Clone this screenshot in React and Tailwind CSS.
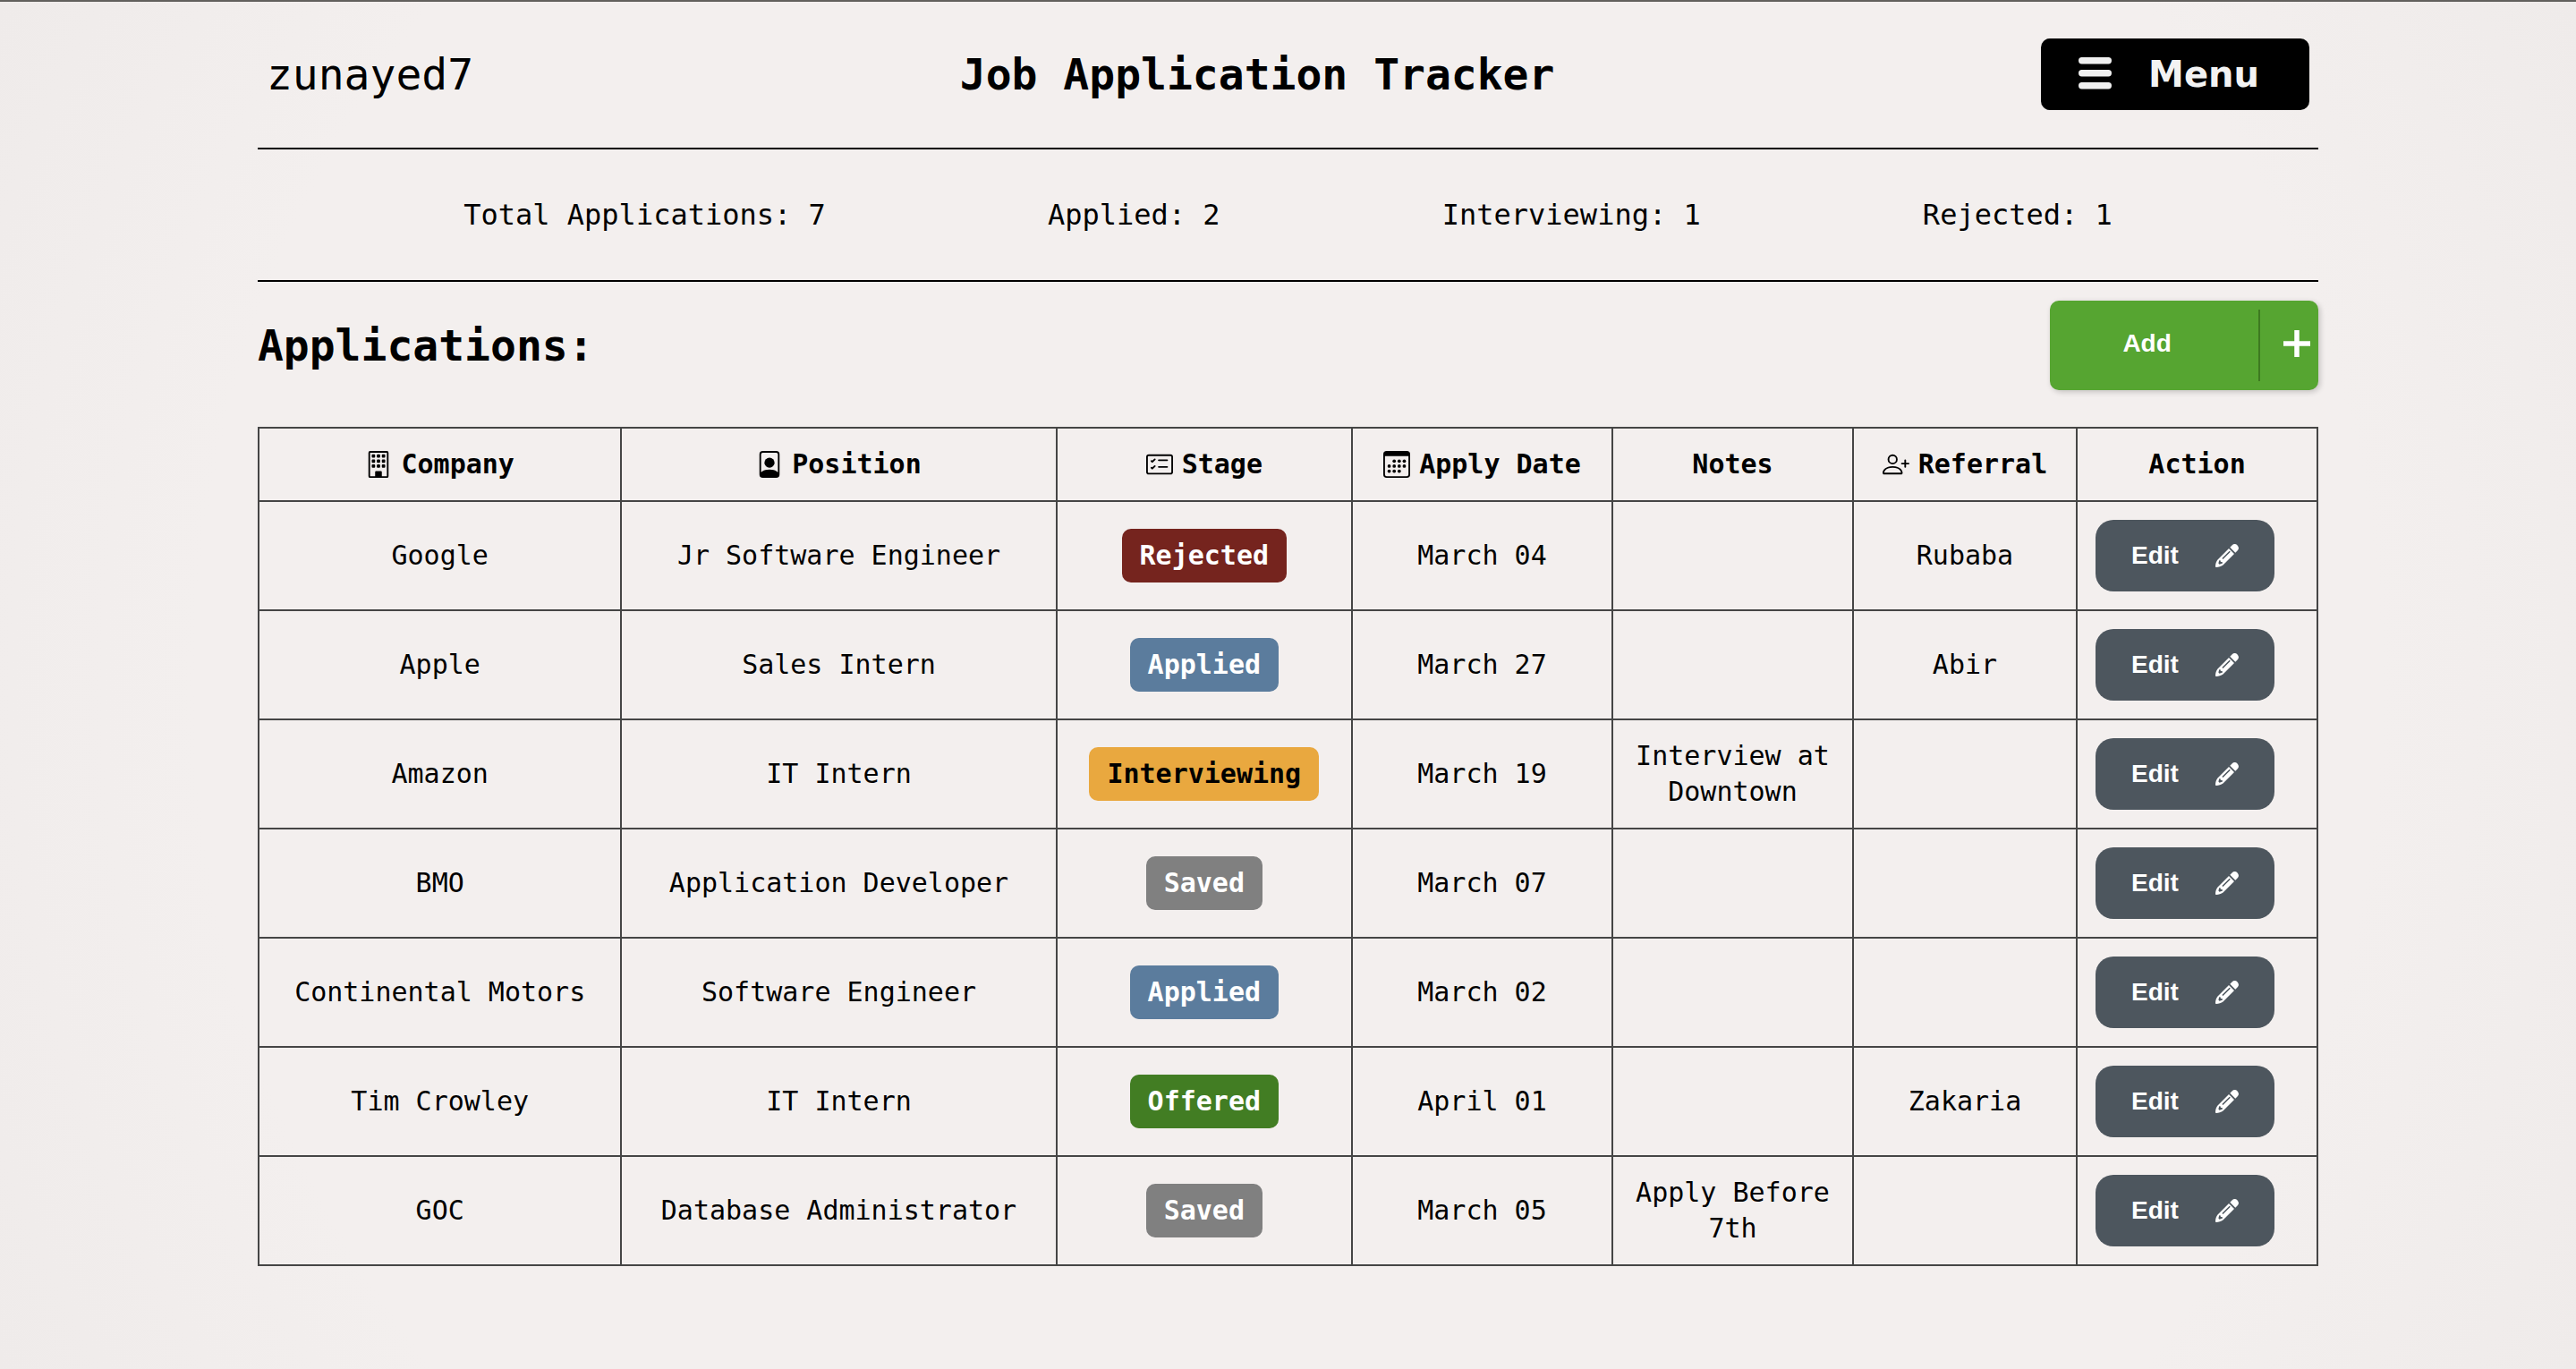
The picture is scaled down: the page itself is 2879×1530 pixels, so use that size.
import { BsBuilding, BsFilePerson, BsCardChecklist, BsPersonPlus } from "react-icons/bs";

const rows = [
  ["Google", "Jr Software Engineer", "Rejected", "March 04", "", "Rubaba"],
  ["Apple", "Sales Intern", "Applied", "March 27", "", "Abir"],
  ["Amazon", "IT Intern", "Interviewing", "March 19", "Interview at Downtown", ""],
  ["BMO", "Application Developer", "Saved", "March 07", "", ""],
  ["Continental Motors", "Software Engineer", "Applied", "March 02", "", ""],
  ["Tim Crowley", "IT Intern", "Offered", "April 01", "", "Zakaria"],
  ["GOC", "Database Administrator", "Saved", "March 05", "Apply Before 7th", ""],
];

const stageStyles = {
  Rejected: "bg-[#75241e] text-white",
  Applied: "bg-[#5b7c9d] text-white",
  Interviewing: "bg-[#e9a83f] text-black",
  Saved: "bg-[#808080] text-white",
  Offered: "bg-[#427d23] text-white",
};

const stats = ["Total Applications: 7", "Applied: 2", "Interviewing: 1", "Rejected: 1"];

function Calendar() {
  return (
    <svg viewBox="0 0 16 16" fill="currentColor" className="size-[30px]" aria-hidden="true">
      <path fillRule="evenodd" d="M2 0h12a2 2 0 0 1 2 2v12a2 2 0 0 1-2 2H2a2 2 0 0 1-2-2V2a2 2 0 0 1 2-2Zm-1 3v11a1 1 0 0 0 1 1h12a1 1 0 0 0 1-1V3.01H1Z" />
      {[[6.5, 6], [9.5, 6], [12.5, 6], [3.5, 9], [6.5, 9], [9.5, 9], [12.5, 9], [3.5, 12], [6.5, 12], [9.5, 12]].map(([x, y]) => (
        <circle key={`${x}-${y}`} cx={x} cy={y} r="1" />
      ))}
    </svg>
  );
}

function Pencil() {
  return (
    <svg viewBox="0 0 26 26" fill="currentColor" className="size-[26px]" aria-hidden="true">
      <path d="M16.300 3.700 18.500 1.500C20.500-.5 22.800-.2 24.600 1.400 26.300 3.200 26.500 5.500 24.500 7.500L22.300 9.700Z" />
      <path
        fillRule="evenodd"
        d="M15 5 21 11 8.500 23.500C6.500 25.200 3.500 25.900 .9 26 .3 26 0 25.700 0 25.100 .1 22.500 .8 19.500 2.500 17.500ZM15.700 7.700 7.400 16 8.500 17.100 16.800 8.800ZM4.200 18.200 3.400 21.600 4.500 22.700 8 21.600 7.600 20 5.800 20 5.800 18.400Z"
      />
    </svg>
  );
}

const columns = [
  ["Company", BsBuilding, "w-[17.62%]"],
  ["Position", BsFilePerson, "w-[21.12%]"],
  ["Stage", BsCardChecklist, "w-[14.36%]"],
  ["Apply Date", Calendar, "w-[12.64%]"],
  ["Notes", null, "w-[11.69%]"],
  ["Referral", BsPersonPlus, "w-[10.86%]"],
  ["Action", null, "w-[11.69%]"],
];

export default function App() {
  return (
    <div className="min-h-screen border-t-2 border-[#62605d] bg-[radial-gradient(circle_at_center,#f3efee_0%,#f3efee_75%,#efebea_100%)] font-['DejaVu_Sans_Mono',monospace] text-black">
      <div className="mx-auto w-4/5">
        <header className="flex items-center justify-between border-b-2 border-black px-2.5 pt-[41px] pb-[42px]">
          <p className="text-5xl">zunayed7</p>
          <h1 className="text-5xl font-bold">Job Application Tracker</h1>
          <button type="button" className="flex h-20 w-[300px] items-center rounded-[10px] bg-black pl-10 font-['DejaVu_Sans',sans-serif] text-[40px] font-bold text-[#f3f3f3]">
            <svg viewBox="0 0 40 40" className="mr-10 size-10" fill="#f0f0f0" aria-hidden="true">
              <rect x="2" y="1" width="37" height="7.500" rx="3.700" />
              <rect x="2" y="15" width="37" height="7.500" rx="3.700" />
              <rect x="2" y="29" width="37" height="7.500" rx="3.700" />
            </svg>
            Menu
          </button>
        </header>

        <section className="flex h-[148px] items-center justify-between border-b-2 border-black px-[10%] text-[32px]">
          {stats.map((s) => <p key={s}>{s}</p>)}
        </section>

        <section className="flex items-center justify-between pt-[21px] pb-[41px]">
          <h2 className="text-5xl font-bold">Applications:</h2>
          <button type="button" className="flex h-[100px] w-[300px] items-center rounded-[10px] bg-[#56a531] py-2.5 font-['Liberation_Sans',sans-serif] text-[28px] font-bold text-white shadow-[2px_2px_6px_rgba(0,0,0,0.2)]">
            <span className="flex-1 pr-4 pb-1">Add</span>
            <span className="flex h-full w-[67px] items-center justify-center border-l-2 border-[#3d7a20] pb-1 pl-4">
              <svg viewBox="0 0 30 30" className="size-[30px]" fill="none" stroke="currentColor" strokeWidth="5.500" aria-hidden="true">
                <path d="M15 0V30M0 15H30" />
              </svg>
            </span>
          </button>
        </section>

        <table className="w-full table-fixed border-collapse text-center text-[30px] leading-10">
          <thead>
            <tr className="h-[82px]">
              {columns.map(([label, Icon, width]) => (
                <th key={label} scope="col" className={`border-2 border-[#454545] p-0 font-bold ${width}`}>
                  <span className="flex items-center justify-center gap-2.5">
                    {Icon && <Icon className="size-[30px]" />}
                    {label}
                  </span>
                </th>
              ))}
            </tr>
          </thead>
          <tbody>
            {rows.map(([company, position, stage, date, notes, referral]) => (
              <tr key={company} className="h-[122px]">
                <td className="border-2 border-[#454545] p-0">{company}</td>
                <td className="border-2 border-[#454545] p-0">{position}</td>
                <td className="border-2 border-[#454545] p-0">
                  <span className={`mx-auto block w-fit rounded-[10px] px-5 py-2.5 font-bold ${stageStyles[stage]}`}>{stage}</span>
                </td>
                <td className="border-2 border-[#454545] p-0">{date}</td>
                <td className="border-2 border-[#454545] px-5 py-0">{notes}</td>
                <td className="border-2 border-[#454545] p-0">{referral}</td>
                <td className="border-2 border-[#454545] px-5 py-0">
                  <button type="button" className="flex h-20 w-[200px] items-center justify-between rounded-[20px] bg-[#4d565e] px-10 font-['Liberation_Sans',sans-serif] text-[28px] font-bold text-white">
                    Edit
                    <Pencil />
                  </button>
                </td>
              </tr>
            ))}
          </tbody>
        </table>
      </div>
    </div>
  );
}
